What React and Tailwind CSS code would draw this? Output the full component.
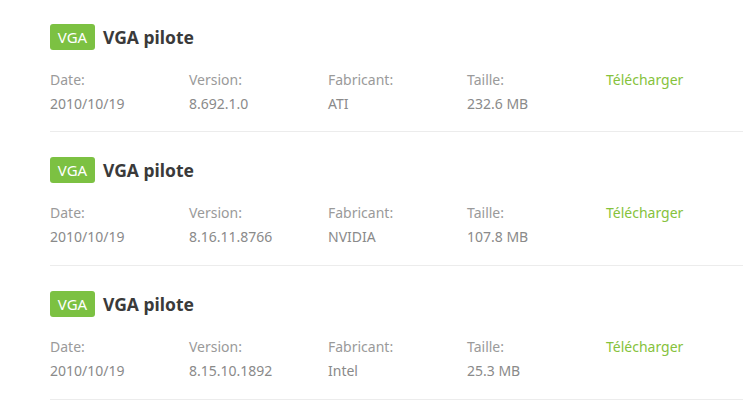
import React from 'react'

const drivers = [
  { date: '2010/10/19', version: '8.692.1.0', maker: 'ATI', size: '232.6 MB' },
  { date: '2010/10/19', version: '8.16.11.8766', maker: 'NVIDIA', size: '107.8 MB' },
  { date: '2010/10/19', version: '8.15.10.1892', maker: 'Intel', size: '25.3 MB' },
]

function Field({ label, value }) {
  return (
    <div className="w-[139px] shrink-0">
      <div className="text-[14px] leading-[24px] text-[#9a9a9a]">{label}</div>
      <div className="text-[14px] leading-[24px] text-[#8a8a8a]">{value}</div>
    </div>
  )
}

function DriverRow({ d, first }) {
  return (
    <div className={`border-b border-[#ececec] ${first ? 'pt-[24px] pb-[15px]' : 'pt-[25px] pb-[16px]'}`}>
      <div className="flex items-center h-[26px]">
        <span className="h-[26px] w-[45px] flex items-center justify-center rounded-[3px] bg-[#7cc142] text-white text-[15px]">
          VGA
        </span>
        <span className="ml-[8px] text-[17.5px] font-bold text-[#3a3a3a]">VGA pilote</span>
      </div>
      <div className="flex mt-[18px]">
        <Field label="Date:" value={d.date} />
        <Field label="Version:" value={d.version} />
        <Field label="Fabricant:" value={d.maker} />
        <Field label="Taille:" value={d.size} />
        <div className="text-[14px] leading-[24px] text-[#86c23c] cursor-pointer">Télécharger</div>
      </div>
    </div>
  )
}

export default function App() {
  return (
    <div
      className="min-h-screen bg-white pl-[50px] overflow-hidden"
      style={{ fontFamily: '"Noto Sans", "Open Sans", sans-serif' }}
    >
      {drivers.map((d, i) => (
        <DriverRow key={i} d={d} first={i === 0} />
      ))}
    </div>
  )
}
